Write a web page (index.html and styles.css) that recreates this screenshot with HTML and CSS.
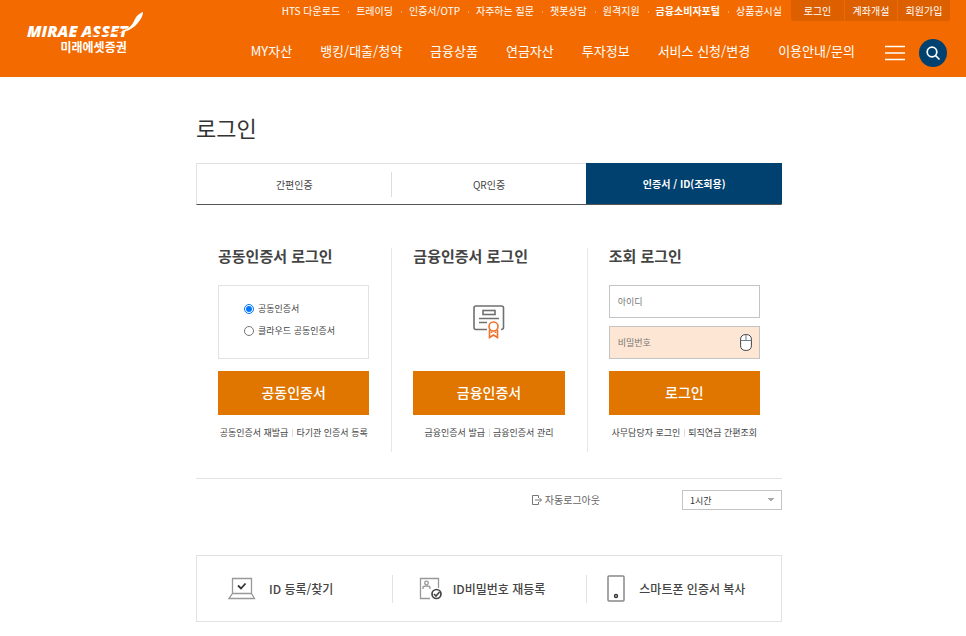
FILE: index.html
```html
<!DOCTYPE html>
<html lang="ko">
<head>
    <meta charset="UTF-8">
    <meta name="viewport" content="width=device-width, initial-scale=1.0">
    <title>로그인 - 미래에셋증권</title>
    <link rel="stylesheet" href="styles.css">
</head>
<body>
    <header class="header">
        <a href="#" class="logo">
            <span class="logo-en">MIRAE ASSET</span>
            <span class="logo-ko">미래에셋증권</span>
            <svg class="logo-wing" viewBox="0 0 66 28" aria-hidden="true">
                <path d="M8 23C24 23 37 22 47 17" fill="none" stroke="#f36b00" stroke-width="1.2"/>
                <path d="M40 21C50 18 54 14 57 7C59 3 62 1 65 0C65 4 62 9 58 13C54 17 48 20 40 21Z" fill="#fff"/>
            </svg>
        </a>
        <div class="header-menus">
            <div class="util">
                <ul class="util-links">
                    <li><a href="#">HTS 다운로드</a></li>
                    <li><a href="#">트레이딩</a></li>
                    <li><a href="#">인증서/OTP</a></li>
                    <li><a href="#">자주하는 질문</a></li>
                    <li><a href="#">챗봇상담</a></li>
                    <li><a href="#">원격지원</a></li>
                    <li><a href="#" class="strong">금융소비자포털</a></li>
                    <li><a href="#">상품공시실</a></li>
                </ul>
                <div class="util-member">
                    <a href="#">로그인</a>
                    <a href="#">계좌개설</a>
                    <a href="#">회원가입</a>
                </div>
            </div>
            <nav class="gnb">
                <a href="#">MY자산</a>
                <a href="#">뱅킹/대출/청약</a>
                <a href="#">금융상품</a>
                <a href="#">연금자산</a>
                <a href="#">투자정보</a>
                <a href="#">서비스 신청/변경</a>
                <a href="#">이용안내/문의</a>
                <button type="button" class="btn-menu" aria-label="전체메뉴">
                    <svg width="20" height="16" viewBox="0 0 20 16"><path d="M0 1.5H20M0 8H20M0 14.5H20" stroke="#fff" stroke-width="1.4"/></svg>
                </button>
                <button type="button" class="btn-search" aria-label="검색">
                    <svg width="14" height="14" viewBox="0 0 14 14" fill="none" stroke="#fff" stroke-width="1.7"><circle cx="6" cy="6" r="4.8"/><path d="M9.5 9.5L13 13" stroke-linecap="round"/></svg>
                </button>
            </nav>
        </div>
    </header>

    <main class="container">
        <h1>로그인</h1>

        <!-- 로그인 방식 탭 -->
        <div class="tabs" role="tablist">
            <button type="button" class="tab" role="tab">간편인증</button>
            <button type="button" class="tab" role="tab">QR인증</button>
            <button type="button" class="tab active" role="tab" aria-selected="true">인증서 / ID(조회용)</button>
        </div>

        <div class="login-grid">
            <section class="login-col">
                <h2>공동인증서 로그인</h2>
                <div class="cert-box">
                    <label><input type="radio" name="cert" checked>공동인증서</label>
                    <label><input type="radio" name="cert">클라우드 공동인증서</label>
                </div>
                <button type="button" class="btn-login">공동인증서</button>
                <div class="sub-links">
                    <a href="#">공동인증서 재발급</a>
                    <a href="#">타기관 인증서 등록</a>
                </div>
            </section>

            <section class="login-col">
                <h2>금융인증서 로그인</h2>
                <div class="cert-icon">
                    <svg width="32" height="34" viewBox="0 0 32 34" fill="none" stroke="#707070" stroke-width="1.6">
                        <path d="M14 24.5H3Q1 24.5 1 22.5V3Q1 1 3 1H28.5Q30.5 1 30.5 3V22.5Q30.5 24.5 28 24.5"/>
                        <rect x="10" y="5.5" width="12" height="4"/>
                        <path d="M6 13.5H26M6 17.5H14"/>
                        <g stroke="#f0712a">
                            <circle cx="20.5" cy="21.5" r="4.5"/>
                            <path d="M16.5 25V32.5L20.5 30L24.5 32.5V25M18.5 26.5V28M22.5 26.5V28" stroke-width="1.6"/>
                        </g>
                    </svg>
                </div>
                <button type="button" class="btn-login">금융인증서</button>
                <div class="sub-links">
                    <a href="#">금융인증서 발급</a>
                    <a href="#">금융인증서 관리</a>
                </div>
            </section>

            <section class="login-col">
                <h2>조회 로그인</h2>
                <form class="id-form">
                    <input type="text" class="field" placeholder="아이디" aria-label="아이디">
                    <div class="field-wrap">
                        <input type="password" class="field field-pw" placeholder="비밀번호" aria-label="비밀번호">
                        <button type="button" class="btn-mouse" aria-label="마우스 입력기">
                            <svg width="12" height="17" viewBox="0 0 12 17"><rect x=".6" y=".6" width="10.8" height="15.8" rx="4.5" fill="#fff" stroke="#444"/><path d="M.6 6.5H11.4M6 .6V6.5" stroke="#6c7f8a"/></svg>
                        </button>
                    </div>
                    <button type="button" class="btn-login">로그인</button>
                </form>
                <div class="sub-links">
                    <a href="#">사무담당자 로그인</a>
                    <a href="#">퇴직연금 간편조회</a>
                </div>
            </section>
        </div>

        <div class="auto-logout">
            <label for="logoutTime">
                <svg width="10" height="10" viewBox="0 0 10 10" fill="none" stroke="#777"><path d="M6.5 3V.5H.5V9.5H6.5V7M3 5H9.5M7.5 3L9.5 5L7.5 7"/></svg>
                자동로그아웃
            </label>
            <select id="logoutTime">
                <option>1시간</option>
                <option>2시간</option>
                <option>4시간</option>
            </select>
        </div>

        <!-- 하단 바로가기 -->
        <div class="quick">
            <a href="#" class="quick-id">
                <svg width="28" height="24" viewBox="0 0 28 24" fill="none" stroke="#999" stroke-width="1.3"><path d="M4.5 16V1.5H23.5V16M4.5 16.5H23.5L26.5 21.5H1Z"/><path d="M10 8.5L13 11.5L17.5 6.5" stroke="#333" stroke-width="1.8"/></svg>
                ID 등록/찾기
            </a>
            <a href="#" class="quick-pw">
                <svg width="24" height="24" viewBox="0 0 24 24" fill="none" stroke="#999" stroke-width="1.3"><path d="M11 21.5H1.5V1.5H19.5V11"/><circle cx="7.5" cy="6" r="1.8"/><path d="M4 12V10.5Q4 9 7.5 9T11 10.5V12"/><circle cx="17.5" cy="17" r="4.5" stroke="#444" stroke-width="1.7"/><path d="M15 17L17 19L20.5 15" stroke="#444" stroke-width="1.6"/></svg>
                ID비밀번호 재등록
            </a>
            <a href="#" class="quick-phone">
                <svg width="18" height="28" viewBox="0 0 18 28" fill="none"><rect x="1" y="1" width="16" height="25" rx="1" stroke="#888" stroke-width="1.5"/><circle cx="9" cy="21" r="1.5" stroke="#333" stroke-width="1.4"/></svg>
                스마트폰 인증서 복사
            </a>
        </div>
    </main>
</body>
</html>
```
FILE: styles.css
```css
:root {
    --orange: #f36b00;
    --orange-dark: #e07500;
    --navy: #00416f;
    --line: #e2e2e2;
    --text: #444;
}

* {
    margin: 0;
    padding: 0;
    box-sizing: border-box;
}

body {
    font-family: "Noto Sans CJK KR", sans-serif;
    background: #fff;
    color: var(--text);
    font-size: 9px;
    line-height: 14px;
}

a {
    color: inherit;
    text-decoration: none;
}

button,
input,
select {
    font-family: inherit;
}

button {
    border: 0;
    cursor: pointer;
}

ul {
    list-style: none;
}

/* header */
.header {
    display: flex;
    justify-content: space-between;
    padding: 0 16px 10px 27px;
    background: var(--orange);
    color: #fff;
}

.logo {
    position: relative;
    display: flex;
    flex-direction: column;
    align-items: flex-end;
    align-self: flex-start;
    margin-top: 22px;
}

.logo-en {
    font-family: "Open Sans", sans-serif;
    font-size: 16px;
    font-weight: 800;
    font-style: italic;
    line-height: 18px;
}

.logo-ko {
    margin-right: 1px;
    font-size: 12px;
    font-weight: 700;
    line-height: 14px;
}

.logo-wing {
    position: absolute;
    right: -16px;
    top: -10px;
    width: 66px;
    height: 28px;
}

.header-menus {
    display: flex;
    flex-direction: column;
    align-items: flex-end;
    gap: 18px;
}

.util {
    display: flex;
    gap: 9px;
    font-size: 10px;
    line-height: 21px;
}

.util-links {
    display: flex;
}

.util-links li + li::before {
    content: "";
    display: inline-block;
    width: 1px;
    height: 2px;
    margin: 0 7px 0 8px;
    vertical-align: middle;
    background: #f9a15c;
}

.util-links .strong {
    font-weight: 700;
}

.util-member {
    display: flex;
    background: #dc6000;
    border-radius: 0 0 2px 2px;
}

.util-member a {
    min-width: 53px;
    padding: 0 7px;
    text-align: center;
}

.util-member a + a {
    border-left: 1px solid #ea6a08;
}

.gnb {
    display: flex;
    align-items: center;
    gap: 28px;
    margin-right: 3px;
    font-size: 13px;
    line-height: 24px;
}

.gnb a {
    padding-bottom: 4px;
}

.btn-menu {
    display: flex;
    margin-left: 2px;
    background: none;
}

.btn-search {
    display: flex;
    align-items: center;
    justify-content: center;
    width: 28px;
    height: 28px;
    margin-left: -14px;
    border-radius: 50%;
    background: var(--navy);
}

/* content */
.container {
    max-width: 598px;
    margin: 0 auto;
    padding: 33px 0 14px 12px;
}

h1 {
    font-size: 22px;
    font-weight: 400;
    line-height: 34px;
    color: #333;
}

.tabs {
    display: grid;
    grid-template-columns: repeat(3, 1fr);
    margin-top: 19px;
    border: 1px solid var(--line);
    border-bottom: 1px solid #555;
}

.tab {
    position: relative;
    height: 40px;
    background: none;
    color: var(--text);
    font-size: 10px;
}

.tab:first-child::after {
    content: "";
    position: absolute;
    right: 0;
    top: 8px;
    bottom: 7px;
    border-right: 1px solid #ddd;
}

.tab.active {
    margin: -1px -1px 0 0;
    height: 41px;
    background: var(--navy);
    color: #fff;
    font-weight: 700;
}

.login-grid {
    display: grid;
    grid-template-columns: repeat(3, 1fr);
    margin-top: 43px;
}

.login-col {
    min-height: 204px;
    padding: 0 22px;
}

.login-col + .login-col {
    border-left: 1px solid #e8e8e8;
    padding-left: 21px;
}

h2 {
    margin-bottom: 21px;
    font-size: 15px;
    font-weight: 700;
    line-height: 16px;
    color: #444;
}

.cert-box {
    display: flex;
    flex-direction: column;
    gap: 8px;
    height: 74px;
    padding: 16px 0 0 25px;
    border: 1px solid var(--line);
}

.cert-box label {
    display: flex;
    align-items: center;
    gap: 4px;
}

.cert-box input {
    width: 10px;
    height: 10px;
}

.cert-icon {
    display: flex;
    justify-content: center;
    align-items: center;
    height: 74px;
}

.btn-login {
    display: block;
    width: 100%;
    height: 44px;
    margin-top: 12px;
    padding-bottom: 2px;
    background: var(--orange-dark);
    color: #fff;
    font-size: 14px;
    font-weight: 500;
}

.field {
    display: block;
    width: 100%;
    height: 33px;
    padding: 0 8px;
    border: 1px solid #c4c4c4;
    font-size: 9px;
}

.field::placeholder {
    color: #777;
}

.field-wrap {
    position: relative;
    margin-top: 8px;
}

.field-pw {
    background: #fde6d4;
}

.btn-mouse {
    position: absolute;
    right: 8px;
    top: 8px;
    display: flex;
    background: none;
}

.sub-links {
    display: flex;
    justify-content: center;
    margin-top: 11px;
    white-space: nowrap;
}

.sub-links a + a {
    margin-left: 4px;
    padding-left: 4px;
    background: linear-gradient(#ddd, #ddd) left center / 1px 8px no-repeat;
}

.auto-logout {
    display: flex;
    justify-content: flex-end;
    align-items: center;
    gap: 82px;
    margin-top: 26px;
    padding-top: 11px;
    border-top: 1px solid var(--line);
}

.auto-logout label {
    display: flex;
    align-items: center;
    gap: 3px;
    font-size: 10px;
    color: #666;
}

.auto-logout select {
    appearance: none;
    width: 100px;
    height: 20px;
    padding: 0 7px;
    border: 1px solid #c4c4c4;
    border-radius: 0;
    background: conic-gradient(from -45deg at 50% 100%, #aaa 90deg, transparent 0) right 7px center / 7px 4px no-repeat;
    background: linear-gradient(to bottom right, #aaa 50%, transparent 50%) right 7px center / 3px 4px no-repeat, linear-gradient(to bottom left, #aaa 50%, transparent 50%) right 10px center / 3px 4px no-repeat;
    color: #333;
    font-size: 9px;
}

.quick {
    display: grid;
    grid-template-columns: repeat(3, 1fr);
    margin-top: 45px;
    padding: 19px 0 18px;
    border: 1px solid var(--line);
}

.quick a {
    display: flex;
    align-items: center;
    height: 28px;
    font-size: 12px;
    font-weight: 500;
    line-height: 18px;
    white-space: nowrap;
}

.quick a + a {
    border-left: 1px solid var(--line);
}

.quick-id {
    gap: 13px;
    padding-left: 31px;
}

.quick-pw {
    gap: 10px;
    padding-left: 26px;
}

.quick-phone {
    gap: 14px;
    padding-left: 20px;
}
```
